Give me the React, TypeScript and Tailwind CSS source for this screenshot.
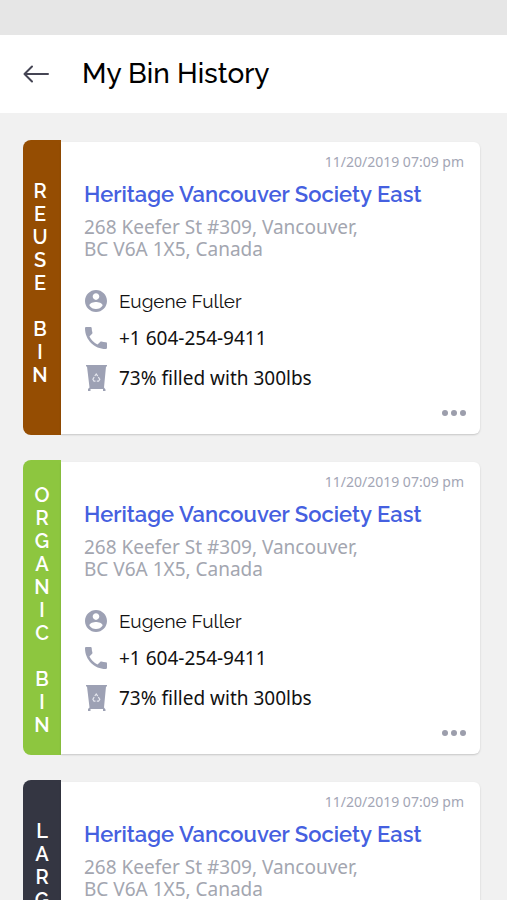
import React from "react";

type Bin = { name: string; bar: string };

const bins: Bin[] = [
  { name: "REUSE BIN", bar: "bg-[#954d02] pt-10 pr-1" },
  { name: "ORGANIC BIN", bar: "bg-[#8dc63f] pt-6" },
  { name: "LARGE BIN", bar: "bg-[#343642] pt-10" },
];

const heading = "font-[Raleway,Lato,sans-serif]";

function PersonIcon() {
  return (
    <svg viewBox="2 2 20 20" className="size-[22px]" fill="#9da1b4" aria-hidden="true">
      <path d="M12 2C6.48 2 2 6.48 2 12s4.48 10 10 10 10-4.48 10-10S17.52 2 12 2zm0 3c1.66 0 3 1.34 3 3s-1.34 3-3 3-3-1.34-3-3 1.34-3 3-3zm0 14.2a7.2 7.2 0 0 1-6-3.22c.03-1.99 4-3.08 6-3.08s5.97 1.09 6 3.08a7.2 7.2 0 0 1-6 3.22z" />
    </svg>
  );
}

function PhoneIcon() {
  return (
    <svg viewBox="3 3 18 18" className="size-[22px]" fill="#9da1b4" aria-hidden="true">
      <path d="M6.620 10.790a15.150 15.150 0 0 0 6.590 6.590l2.200-2.200c.27-.27.67-.36 1.020-.24 1.120.37 2.330.57 3.570.57.55 0 1 .45 1 1V20c0 .55-.45 1-1 1C10.610 21 3 13.390 3 4c0-.55.45-1 1-1h3.500c.55 0 1 .45 1 1 0 1.250.2 2.450.57 3.570.11.35.03.74-.25 1.020l-2.200 2.200z" />
    </svg>
  );
}

function BinIcon() {
  return (
    <svg viewBox="0 0 22 28" className="h-7 w-[22px]" fill="#9da1b4" aria-hidden="true">
      <path d="M1 1h21v1.500h-1l-2 21 1.500 2V27H18v-2H5.500v2H3v-2l1.500-1.500L2 2.500H1z" />
      <g fill="none" stroke="#e6e8ef" strokeWidth="1.200">
        <path d="M9.800 12l1.400-2 1.500 2.200M13.300 13l1.500 2.300-1.200 1.900h-1.800M10.500 17.200H9l-1.100-1.900 1.300-2.300" />
      </g>
    </svg>
  );
}

function BinCard({ name, bar }: Bin) {
  return (
    <article className="flex h-[295px] shrink-0">
      <h3
        aria-label={name}
        className={`flex w-[38px] shrink-0 flex-col items-center rounded-l-lg text-[20px] leading-[23px] font-semibold text-white ${heading} ${bar}`}
      >
        {name.split("").map((letter, i) => (
          <span key={i} className="h-[23px]">{letter}</span>
        ))}
      </h3>
      <div className="mt-0.5 mb-px flex min-w-0 flex-1 flex-col rounded-r-md bg-white pr-4 pl-[23px] shadow-[0_1px_2px_rgba(0,0,0,0.18)]">
        <time className="mt-3 self-end text-[14px] leading-4 text-[#a3a6b5]">11/20/2019 07:09 pm</time>
        <h2 className="mt-2.5">
          <a href="#location" className={`block text-[22px] leading-7 font-semibold whitespace-nowrap text-[#4560e0] ${heading}`}>
            Heritage Vancouver Society East
          </a>
        </h2>
        <address className="mt-2 text-[19px] leading-[22px] text-[#a3a6b0] not-italic">
          268 Keefer St #309, Vancouver,
          <br />
          BC V6A 1X5, Canada
        </address>
        <ul className="mt-[23px] pl-px text-[19px] text-[#111111]">
          <li className={`flex h-9 items-center gap-3 ${heading}`}>
            <PersonIcon />
            Eugene Fuller
          </li>
          <li className="flex h-[38px] items-center gap-3">
            <PhoneIcon />
            +1 604-254-9411
          </li>
          <li className="flex h-[42px] items-center gap-3">
            <BinIcon />
            73% filled with 300lbs
          </li>
        </ul>
        <button aria-label="More options" className="mt-1.5 -mr-1.5 flex h-4 w-8 items-center justify-center gap-[3px] self-end">
          <span className="size-1.5 rounded-full bg-[#9c9eac]" />
          <span className="size-1.5 rounded-full bg-[#9c9eac]" />
          <span className="size-1.5 rounded-full bg-[#9c9eac]" />
        </button>
      </div>
    </article>
  );
}

export default function App() {
  return (
    <div className="flex h-screen flex-col bg-[#f1f1f1] font-['Noto_Sans',sans-serif]">
      <div className="h-[35px] shrink-0 bg-[#e6e6e6]" />
      <header className="flex h-[78px] shrink-0 items-center gap-[33px] bg-white px-[23px]">
        <button aria-label="Back">
          <svg viewBox="0 0 26 18" className="h-[18px] w-[26px]" fill="none" stroke="#454554" strokeWidth="2" strokeLinecap="round" strokeLinejoin="round">
            <path d="M25 9H1.500M9 1.500L1.500 9 9 16.500" />
          </svg>
        </button>
        <h1 className={`text-[28px] leading-9 font-medium text-black ${heading}`}>My Bin History</h1>
      </header>
      <main className="flex flex-1 flex-col gap-[25px] overflow-y-auto px-[27px] pt-[27px] pb-[27px] pl-[23px] [scrollbar-width:none]">
        {bins.map((bin) => (
          <BinCard key={bin.name} {...bin} />
        ))}
      </main>
    </div>
  );
}
